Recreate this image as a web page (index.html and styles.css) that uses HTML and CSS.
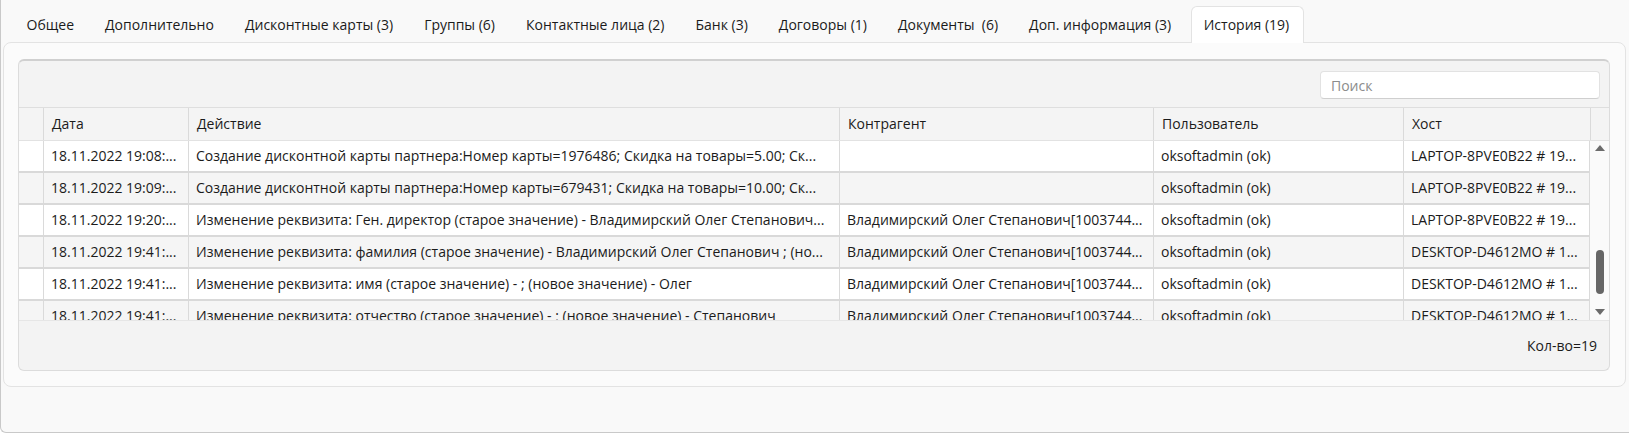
FILE: index.html
```html
<!DOCTYPE html>
<html>
<head>
    <meta charset="utf-8">
    <link rel="stylesheet" href="styles.css">
</head>
<body>
    <div class="window">
        <div class="tabs">
            <div class="tab">Общее</div>
            <div class="tab">Дополнительно</div>
            <div class="tab">Дисконтные карты (3)</div>
            <div class="tab">Группы (6)</div>
            <div class="tab">Контактные лица (2)</div>
            <div class="tab">Банк (3)</div>
            <div class="tab">Договоры (1)</div>
            <div class="tab">Документы&nbsp; (6)</div>
            <div class="tab">Доп. информация (3)</div>
            <div class="tab active">История (19)</div>
        </div>

        <div class="pane">
            <div class="grid-panel">
                <div class="toolbar">
                    <input class="search" type="text" placeholder="Поиск">
                </div>

                <div class="thead">
                    <div class="th"></div>
                    <div class="th">Дата</div>
                    <div class="th">Действие</div>
                    <div class="th">Контрагент</div>
                    <div class="th">Пользователь</div>
                    <div class="th">Хост</div>
                    <div class="th"></div>
                </div>

                <div class="tbody">
                    <div class="rows">
                        <div class="tr">
                            <div class="td"></div>
                            <div class="td">18.11.2022 19:08:...</div>
                            <div class="td">Создание дисконтной карты партнера:Номер карты=1976486; Скидка на товары=5.00; Ск...</div>
                            <div class="td"></div>
                            <div class="td">oksoftadmin (ok)</div>
                            <div class="td">LAPTOP-8PVE0B22 # 19...</div>
                        </div>
                        <div class="tr alt">
                            <div class="td"></div>
                            <div class="td">18.11.2022 19:09:...</div>
                            <div class="td">Создание дисконтной карты партнера:Номер карты=679431; Скидка на товары=10.00; Ск...</div>
                            <div class="td"></div>
                            <div class="td">oksoftadmin (ok)</div>
                            <div class="td">LAPTOP-8PVE0B22 # 19...</div>
                        </div>
                        <div class="tr">
                            <div class="td"></div>
                            <div class="td">18.11.2022 19:20:...</div>
                            <div class="td">Изменение реквизита: Ген. директор (старое значение) - Владимирский Олег Степанович...</div>
                            <div class="td">Владимирский Олег Степанович[1003744...</div>
                            <div class="td">oksoftadmin (ok)</div>
                            <div class="td">LAPTOP-8PVE0B22 # 19...</div>
                        </div>
                        <div class="tr alt">
                            <div class="td"></div>
                            <div class="td">18.11.2022 19:41:...</div>
                            <div class="td">Изменение реквизита: фамилия (старое значение) - Владимирский Олег Степанович ; (но...</div>
                            <div class="td">Владимирский Олег Степанович[1003744...</div>
                            <div class="td">oksoftadmin (ok)</div>
                            <div class="td">DESKTOP-D4612MO # 1...</div>
                        </div>
                        <div class="tr">
                            <div class="td"></div>
                            <div class="td">18.11.2022 19:41:...</div>
                            <div class="td">Изменение реквизита: имя (старое значение) - ; (новое значение) - Олег</div>
                            <div class="td">Владимирский Олег Степанович[1003744...</div>
                            <div class="td">oksoftadmin (ok)</div>
                            <div class="td">DESKTOP-D4612MO # 1...</div>
                        </div>
                        <div class="tr alt">
                            <div class="td"></div>
                            <div class="td">18.11.2022 19:41:...</div>
                            <div class="td">Изменение реквизита: отчество (старое значение) - ; (новое значение) - Степанович</div>
                            <div class="td">Владимирский Олег Степанович[1003744...</div>
                            <div class="td">oksoftadmin (ok)</div>
                            <div class="td">DESKTOP-D4612MO # 1...</div>
                        </div>
                    </div>
                    <div class="vscroll">
                        <svg class="arrow" width="10" height="6" viewBox="0 0 10 6"><path d="M0 6 L5 0 L10 6 Z" fill="#6b6b6b"/></svg>
                        <div class="track">
                            <div class="thumb"></div>
                        </div>
                        <svg class="arrow" width="10" height="6" viewBox="0 0 10 6"><path d="M0 0 L5 6 L10 0 Z" fill="#6b6b6b"/></svg>
                    </div>
                </div>

                <div class="footer">Кол-во=19</div>
            </div>
        </div>
    </div>
</body>
</html>
```

FILE: styles.css
```css
body {
    margin: 0;
    font-family: "Open Sans", "Noto Sans", sans-serif;
    font-size: 14px;
    color: #1b1b1b;
    background: #ffffff;
}
.window {
    width: 1629px;
    height: 433px;
    box-sizing: border-box;
    background: #f9f9f9;
    border-left: 1px solid #c9c9c9;
    border-bottom: 1px solid #c9c9c9;
    border-bottom-left-radius: 6px;
}

/* tabs */
.tabs {
    display: flex;
    height: 42px;
    padding-left: 10px;
    align-items: flex-end;
}
.tab {
    height: 37px;
    line-height: 35px;
    padding: 0 14.5px;
    white-space: nowrap;
    box-sizing: border-box;
    margin-bottom: -1px;
    position: relative;
    border: 1px solid transparent;
    border-bottom: none;
}
.tab.active {
    background: #ffffff;
    border-color: #e3e3e3;
    border-radius: 6px 6px 0 0;
    padding: 0 14px 0 12px;
    margin-left: 4px;
    z-index: 1;
}

/* pane */
.pane {
    margin: 0 3px 0 2px;
    height: 345px;
    box-sizing: border-box;
    background: #fbfbfb;
    border: 1px solid #e3e3e3;
    border-radius: 8px;
    padding: 16px 15px 15px 14px;
}
.grid-panel {
    height: 312px;
    box-sizing: border-box;
    background: #f3f3f3;
    border: 1px solid #dcdcdc;
    border-top: 2px solid #d0d0d0;
    border-radius: 6px;
    display: flex;
    flex-direction: column;
    overflow: hidden;
}
.toolbar {
    height: 47px;
    display: flex;
    justify-content: flex-end;
    align-items: flex-start;
    padding: 10px 9px 0 0;
    box-sizing: border-box;
    border-bottom: 1px solid #dedede;
}
.search {
    width: 280px;
    height: 28px;
    box-sizing: border-box;
    border: 1px solid #e2e2e2;
    border-bottom-color: #cfcfcf;
    border-radius: 4px;
    background: #ffffff;
    padding: 0 10px;
    font-family: inherit;
    font-size: 14px;
    outline: none;
}
.search::placeholder {
    color: #8c8c8c;
}

/* table */
.thead, .tr {
    display: grid;
    grid-template-columns: 24px 145px 651px 314px 250px 187px 20px;
}
.tr {
    grid-template-columns: 24px 145px 651px 314px 250px 187px;
}
.thead {
    height: 32px;
    background: #f4f4f4;
    border-bottom: 1px solid #e2e2e2;
}
.th {
    line-height: 32px;
    padding-left: 8px;
    border-left: 1px solid #dadada;
    white-space: nowrap;
}
.th:first-child {
    border-left: none;
}
.tbody {
    display: flex;
    height: 179px;
    overflow: hidden;
}
.rows {
    width: 1571px;
    overflow: hidden;
}
.tr {
    height: 30px;
    background: #ffffff;
    border-bottom: 2px solid #d9d9d9;
}
.tr.alt {
    background: #f5f5f5;
}
.td {
    line-height: 30px;
    padding-left: 7px;
    border-left: 1px solid #dadada;
    white-space: nowrap;
    overflow: hidden;
}
.td:first-child {
    border-left: none;
}
.vscroll {
    width: 20px;
    background: #fafafa;
    border-left: 1px solid #dadada;
    box-sizing: border-box;
    display: flex;
    flex-direction: column;
    align-items: center;
    padding: 4px 0 5px;
}
.track {
    flex: 1;
    position: relative;
    width: 8px;
}
.thumb {
    position: absolute;
    left: 0;
    top: 99px;
    width: 8px;
    height: 44px;
    border-radius: 4px;
    background: #666666;
}
.footer {
    flex: 1;
    display: flex;
    justify-content: flex-end;
    align-items: center;
    padding-right: 12px;
    border-top: 1px solid #e6e6e6;
}
```
